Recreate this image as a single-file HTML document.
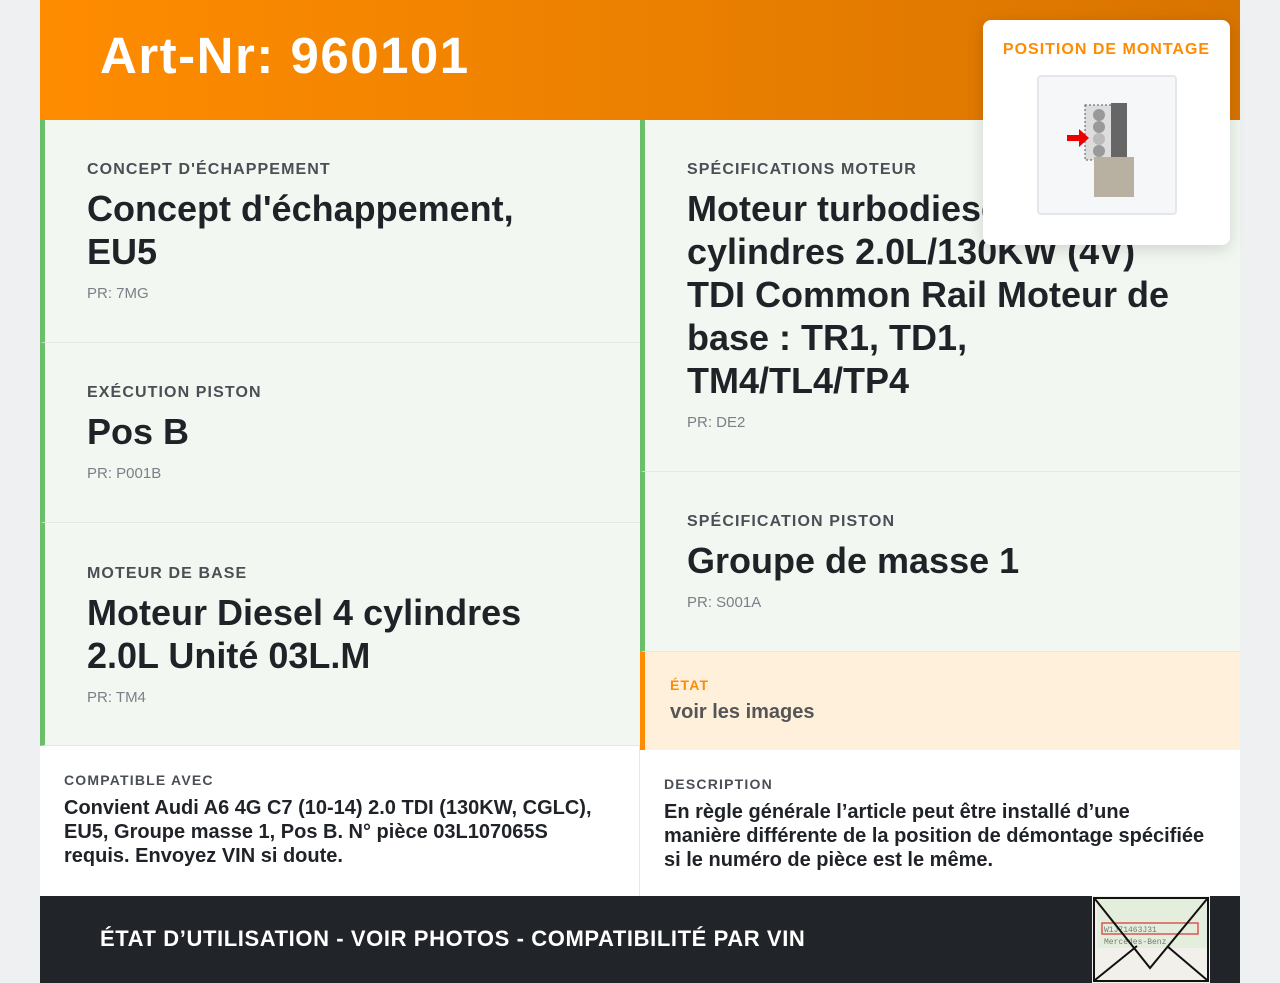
<!DOCTYPE html>
<html><head><meta charset="utf-8"><style>
*{box-sizing:border-box;margin:0;padding:0}
body{width:1280px;height:983px;background:#eef0f2;font-family:"Liberation Sans",sans-serif;overflow:hidden;position:relative}
.wrap{position:absolute;left:40px;top:0;width:1200px;height:983px;background:#fff}
.hdr{position:absolute;left:0;top:0;width:1200px;height:120px;background:linear-gradient(90deg,#ff8c00,#d87400)}
.hdr h1{position:absolute;left:60px;top:26px;color:#fff;font-size:51px;font-weight:bold;letter-spacing:1.5px}
.sec{position:absolute;background:#f2f8f1;border-left:5px solid #6cbf6a;border-bottom:1px solid #e2e8e2;padding-left:42px}
.lab{font-size:16px;letter-spacing:1.1px;color:#4a4f55;font-weight:bold;text-transform:uppercase}
.val{font-size:36px;font-weight:bold;color:#1f2328;line-height:43px;margin-top:8px}
.pr{font-size:15px;color:#7a8087;margin-top:12px}
.pop{position:absolute;left:943px;top:20px;width:247px;height:225px;background:#fff;border-radius:8px;box-shadow:0 4px 16px rgba(0,0,0,.15)}
.pop .t{position:absolute;top:21px;width:100%;text-align:center;color:#ff8c00;font-weight:bold;font-size:16px;letter-spacing:1px}
.pop .img{position:absolute;left:54px;top:55px;width:140px;height:140px;background:#f6f7f9;border:2px solid #e3e6ea;border-radius:4px}
.b{position:absolute;top:746px;height:150px;padding:26px 24px}
.b .l{font-size:14px;letter-spacing:1.2px;color:#4a4f55;font-weight:bold}
.b .x{font-size:20px;font-weight:bold;color:#1f2328;line-height:24px;margin-top:8px}
.ft{position:absolute;left:0;top:896px;width:1200px;height:87px;background:#212428}
.ft span{position:absolute;left:60px;top:30px;color:#fff;font-weight:bold;font-size:22px;letter-spacing:0.6px}
</style></head><body>
<div class="wrap">
<div class="hdr"><h1>Art-Nr: 960101</h1></div>
<div class="sec" style="left:0;top:120px;width:600px;height:223px;padding-top:41px"><div class="lab">Concept d'échappement</div><div class="val">Concept d'échappement,<br>EU5</div><div class="pr">PR: 7MG</div></div>
<div class="sec" style="left:0;top:343px;width:600px;height:180px;padding-top:41px"><div class="lab">Exécution piston</div><div class="val">Pos B</div><div class="pr">PR: P001B</div></div>
<div class="sec" style="left:0;top:523px;width:600px;height:223px;padding-top:42px"><div class="lab">Moteur de base</div><div class="val">Moteur Diesel 4 cylindres<br>2.0L Unité 03L.M</div><div class="pr">PR: TM4</div></div>
<div class="sec" style="left:600px;top:120px;width:600px;height:352px;padding-top:41px"><div class="lab">Spécifications moteur</div><div class="val">Moteur turbodiesel 4<br>cylindres 2.0L/130KW (4V)<br>TDI Common Rail Moteur de<br>base : TR1, TD1,<br>TM4/TL4/TP4</div><div class="pr">PR: DE2</div></div>
<div class="sec" style="left:600px;top:472px;width:600px;height:180px;padding-top:41px"><div class="lab">Spécification piston</div><div class="val">Groupe de masse 1</div><div class="pr">PR: S001A</div></div>
<div style="position:absolute;left:600px;top:652px;width:600px;height:98px;background:#fff0dc;border-left:5px solid #ff8c00;padding:25px 25px"><div style="color:#ff8c00;font-size:14px;letter-spacing:1.2px;font-weight:bold">ÉTAT</div><div style="font-size:20px;color:#555;font-weight:bold;margin-top:8px">voir les images</div></div>
<div class="b" style="left:0;width:600px;border-right:1px solid #e5e7ea"><div class="l">COMPATIBLE AVEC</div><div class="x">Convient Audi A6 4G C7 (10-14) 2.0 TDI (130KW, CGLC), EU5, Groupe masse 1, Pos B. N° pièce 03L107065S requis. Envoyez VIN si doute.</div></div>
<div class="b" style="left:600px;top:750px;width:600px"><div class="l">DESCRIPTION</div><div class="x">En règle générale l’article peut être installé d’une<br>manière différente de la position de démontage spécifiée<br>si le numéro de pièce est le même.</div></div>
<div class="ft"><span>ÉTAT D’UTILISATION - VOIR PHOTOS - COMPATIBILITÉ PAR VIN</span>
<svg style="position:absolute;left:1052px;top:0" width="118" height="87" viewBox="0 0 118 87"><rect x="0" y="0" width="118" height="87" fill="#f2f0ea"/><rect x="5" y="2" width="110" height="50" fill="#e3efdc"/><rect x="10" y="27" width="96" height="11" fill="none" stroke="#d55" stroke-width="1.5"/><text x="12" y="36" font-size="8" fill="#777" font-family="Liberation Mono">W1J71463J31</text><text x="12" y="48" font-size="8" fill="#777" font-family="Liberation Mono">Mercedes-Benz</text><path d="M3 3 L58 72 L115 3 M3 84 L45 50 M115 84 L75 50" stroke="#111" stroke-width="2" fill="none"/><rect x="2" y="2" width="114" height="83" fill="none" stroke="#111" stroke-width="2"/></svg></div>
<div class="pop"><div class="t">POSITION DE MONTAGE</div><div class="img">
<svg width="136" height="136" viewBox="0 0 136 136"><rect x="46" y="28" width="28" height="55" fill="#ddd" stroke="#555" stroke-dasharray="2 2"/><rect x="72" y="26" width="16" height="60" fill="#666"/><rect x="55" y="80" width="40" height="40" fill="#b8b0a0"/><circle cx="60" cy="38" r="6" fill="#999"/><circle cx="60" cy="50" r="6" fill="#999"/><circle cx="60" cy="62" r="6" fill="#bbb"/><circle cx="60" cy="74" r="6" fill="#999"/><path d="M28 58 h12 v-6 l10 9 l-10 9 v-6 h-12z" fill="#e00"/></svg></div></div>
</div>
</body></html>
